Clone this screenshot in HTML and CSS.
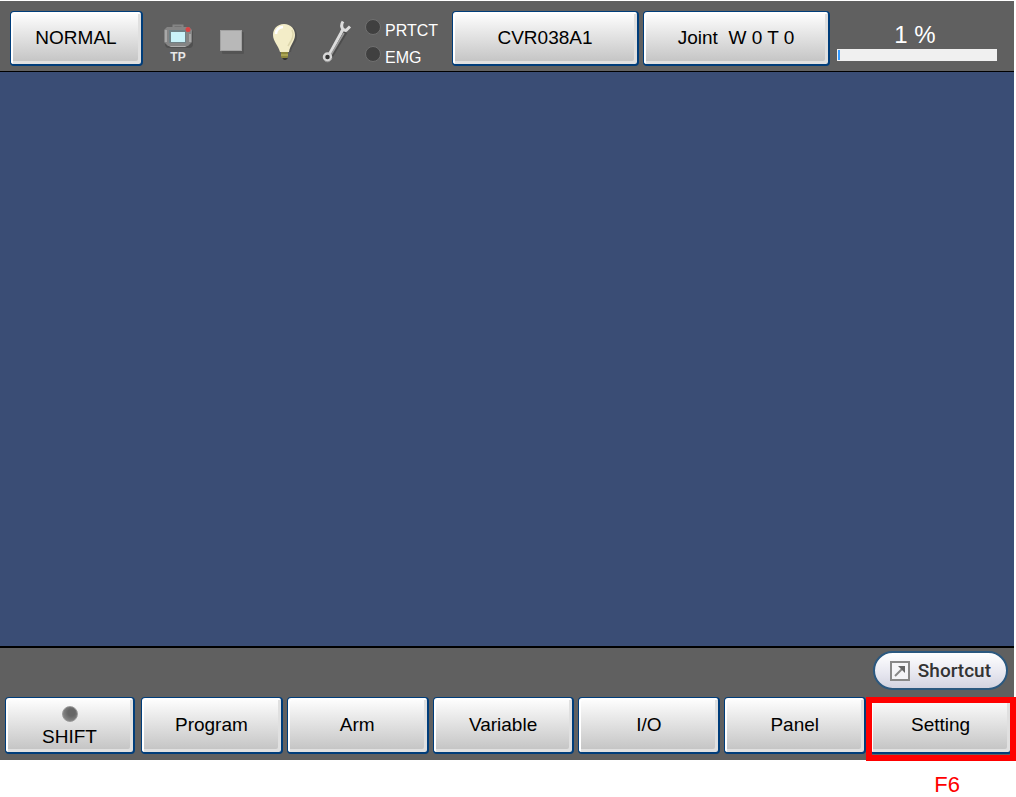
FILE: index.html
```html
<!DOCTYPE html>
<html lang="en">
<head>
    <meta charset="UTF-8">
    <meta name="viewport" content="width=device-width, initial-scale=1.0">
    <title>Teach Pendant</title>
    <link rel="stylesheet" href="styles.css">
</head>
<body>
    <div class="pendant">
        <header class="status-bar">
            <button type="button" class="key mode-key">NORMAL</button>
            <div class="indicators">
                <div class="tp">
                    <svg width="30" height="26" viewBox="0 0 30 26">
                        <path d="M10.500 4V1.500h9V4" fill="none" stroke="#858585" stroke-width="2"/>
                        <rect x="2" y="5" width="28" height="19" rx="4" fill="#404040" opacity=".5"/>
                        <path d="M4 3h22l3 3v12l-4 4H5l-4-4V6z" fill="#858585"/>
                        <path d="M3 6v12M27 10v8" stroke="#a8a8a8" stroke-width="2"/>
                        <path d="M6 22h18l-2 1H8z" fill="#b0b0b0"/>
                        <rect x="6" y="6" width="17" height="13" fill="#6f8186"/>
                        <rect x="8" y="8" width="14" height="10" fill="#c9f3fa"/>
                        <circle cx="25" cy="5.500" r="2.500" fill="#d94444"/>
                    </svg>
                    <span>TP</span>
                </div>
                <svg class="stop" width="26" height="26" viewBox="0 0 26 26">
                    <rect x="3" y="3" width="22" height="22" rx="1" fill="#4c4c4c" opacity=".6"/>
                    <rect x="1.500" y="1.500" width="21" height="20" fill="#b8b8b8" stroke="#a2a2a2"/>
                </svg>
                <svg class="bulb" width="26" height="38" viewBox="0 0 26 38">
                    <path d="M14 2C7 2 3 7 3 13c0 7 5 9 7 16h9c1-7 6-9 6-16C25 7 21 2 14 2z" fill="#484848" opacity=".6"/>
                    <path d="M12 1C5 1 1 6 1 12c0 6 5 10 7 17h9c1-7 6-11 6-17C23 6 19 1 12 1z" fill="#f3edc8"/>
                    <path d="M4 11c0-4 3-7 7-7" fill="none" stroke="#fff" stroke-width="2.500"/>
                    <path d="M20 7c3 6-1 11-4 16" fill="none" stroke="#ddd6ad" stroke-width="1.500"/>
                    <path d="M9 29h7v5l-2 2h-3l-2-2z" fill="#8d873c"/>
                    <path d="M9 32h7" stroke="#c9c269"/>
                    <path d="M10 35h6l-2 2h-2z" fill="#333"/>
                </svg>
                <svg class="wrench" width="30" height="44" viewBox="0 0 30 44">
                    <g fill="none" stroke-linejoin="round">
                        <path d="M23 12 8 37" stroke="#454545" stroke-width="5" opacity=".7"/>
                        <path d="M21 1.500c-2 3-2 5 0 8l3 1 4-4M21 9l-2 4L7 35" stroke="#dcdcdc" stroke-width="3"/>
                        <path d="M22 13 9 35" stroke="#999" stroke-width="1.500"/>
                        <circle cx="5.500" cy="37" r="3.500" fill="#333" stroke="#d6d6d6" stroke-width="2.500"/>
                        <path d="M3 41c3 2 6 0 7-3" stroke="#999"/>
                    </g>
                </svg>
                <ul class="lamps">
                    <li><span class="lamp"></span>PRTCT</li>
                    <li><span class="lamp"></span>EMG</li>
                </ul>
            </div>
            <div class="robot-keys">
                <button type="button" class="key">CVR038A1</button>
                <button type="button" class="key">Joint &nbsp;W 0 T 0</button>
            </div>
            <div class="speed">
                <label for="speed">1 %</label>
                <progress id="speed" value="1" max="100">1 %</progress>
            </div>
        </header>

        <main class="work-area"></main>

        <footer class="key-panel">
            <button type="button" class="shortcut">
                <svg width="20" height="22" viewBox="0 0 20 22">
                    <rect x="1" y="2" width="18" height="18" fill="#f5f5f8" stroke="#888" stroke-width="2"/>
                    <path d="M5 16 13 8" stroke="#888" stroke-width="2"/>
                    <path d="M8 6h7v7z" fill="#666"/>
                </svg>
                Shortcut
            </button>
            <nav class="function-keys">
                <button type="button" class="key shift-key"><span class="shift-lamp"></span>SHIFT</button>
                <button type="button" class="key">Program</button>
                <button type="button" class="key">Arm</button>
                <button type="button" class="key">Variable</button>
                <button type="button" class="key">I/O</button>
                <button type="button" class="key">Panel</button>
                <div class="marked">
                    <button type="button" class="key">Setting</button>
                    <span class="marker"></span>
                </div>
            </nav>
        </footer>
    </div>
    <p class="caption">F6</p>
</body>
</html>
```
FILE: styles.css
```css
* {
    box-sizing: border-box;
}

body {
    display: flex;
    flex-direction: column;
    min-height: 100vh;
    margin: 0;
    background: #fff;
    font-family: "Liberation Sans", Arial, sans-serif;
}

/* Pendant screen */
.pendant {
    display: flex;
    flex: 1;
    flex-direction: column;
    margin: 1px 2px 0 0;
    background: #606060;
}

.work-area {
    flex: 1;
    background: #3a4d75;
}

/* Keys */
.key {
    min-width: 0;
    height: 57px;
    padding: 0;
    border: 1px solid #003d7a;
    border-right-width: 2px;
    border-bottom-width: 2px;
    border-radius: 4px;
    background: linear-gradient(#fff, #c2c2c2);
    box-shadow: inset 2px 2px 0 #fff, inset -3px -3px 0 #e0e0e0;
    color: #000;
    font-family: inherit;
    font-size: 19px;
    line-height: 22px;
    cursor: pointer;
}

/* Status bar */
.status-bar {
    display: flex;
    align-items: flex-start;
    height: 71px;
    padding: 10px 17px 0 10px;
    border-bottom: 1px solid #000;
}

.status-bar .key {
    height: 55px;
}

.mode-key {
    flex: 0 0 133px;
}

.indicators {
    display: flex;
    flex: 0 0 309px;
    align-items: center;
    height: 62px;
    padding-left: 20px;
}

.tp {
    display: flex;
    flex-direction: column;
    align-items: center;
    margin-right: 26px;
    padding-top: 3px;
    color: #e8e8e8;
    font-size: 12px;
    font-weight: bold;
    line-height: 14px;
}

.stop {
    margin-right: 27px;
}

.bulb {
    margin-right: 24px;
}

.wrench {
    margin-right: 13px;
}

.lamps {
    margin: 0;
    padding: 4px 0 0;
    color: #fff;
    font-size: 16px;
    line-height: 27px;
    list-style: none;
}

.lamps li {
    display: flex;
    gap: 4px;
}

.lamp {
    width: 16px;
    height: 16px;
    margin-top: 2px;
    border: 1px solid #707070;
    border-radius: 50%;
    background: #404040;
}

.robot-keys {
    display: flex;
    flex: 1;
    gap: 4px;
}

.robot-keys .key {
    flex: 1;
}

.speed {
    flex: 0 0 160px;
    margin-left: 7px;
    color: #fff;
    font-size: 24px;
    line-height: 28px;
    text-align: center;
}

.speed label {
    display: block;
    padding: 10px 4px 0 0;
}

.speed progress {
    display: block;
    width: 100%;
    height: 12px;
    padding: 1px;
    border: 0;
    background: #f0f0f0;
    appearance: none;
}

.speed progress::-webkit-progress-bar {
    background: #f0f0f0;
}

.speed progress::-webkit-progress-value {
    background: #3399ff;
}

/* Function keys */
.key-panel {
    padding: 3px 2px 6px 5px;
    border-top: 2px solid #000;
}

.shortcut {
    display: flex;
    align-items: center;
    gap: 8px;
    height: 39px;
    margin: 0 4px 7px auto;
    padding: 0 15px;
    border: 2px solid #2b587f;
    border-radius: 20px;
    background: linear-gradient(#fff, #e6e6ef 60%, #d3d3e0);
    color: #333;
    font-family: Roboto, sans-serif;
    font-size: 19px;
    font-weight: 500;
    cursor: pointer;
}

.function-keys {
    display: grid;
    grid-template-columns: 132px repeat(6, 1fr);
    gap: 4px;
}

.shift-key {
    display: flex;
    flex-direction: column;
    align-items: center;
    gap: 4px;
    margin-right: 2px;
    padding-top: 8px;
}

.shift-lamp {
    flex: none;
    width: 16px;
    height: 16px;
    border: 1px solid #999;
    border-radius: 50%;
    background: radial-gradient(circle at 60% 40%, #666 30%, #999);
}

/* Marked key */
.marked {
    position: relative;
    display: grid;
}

.marker {
    position: absolute;
    inset: 0 -4px -7px;
    border: 6px solid #f00;
    pointer-events: none;
}

.caption {
    margin: 0;
    padding: 12px 56px 0 0;
    color: #f00;
    font-size: 22px;
    line-height: 25px;
    text-align: right;
}
```
